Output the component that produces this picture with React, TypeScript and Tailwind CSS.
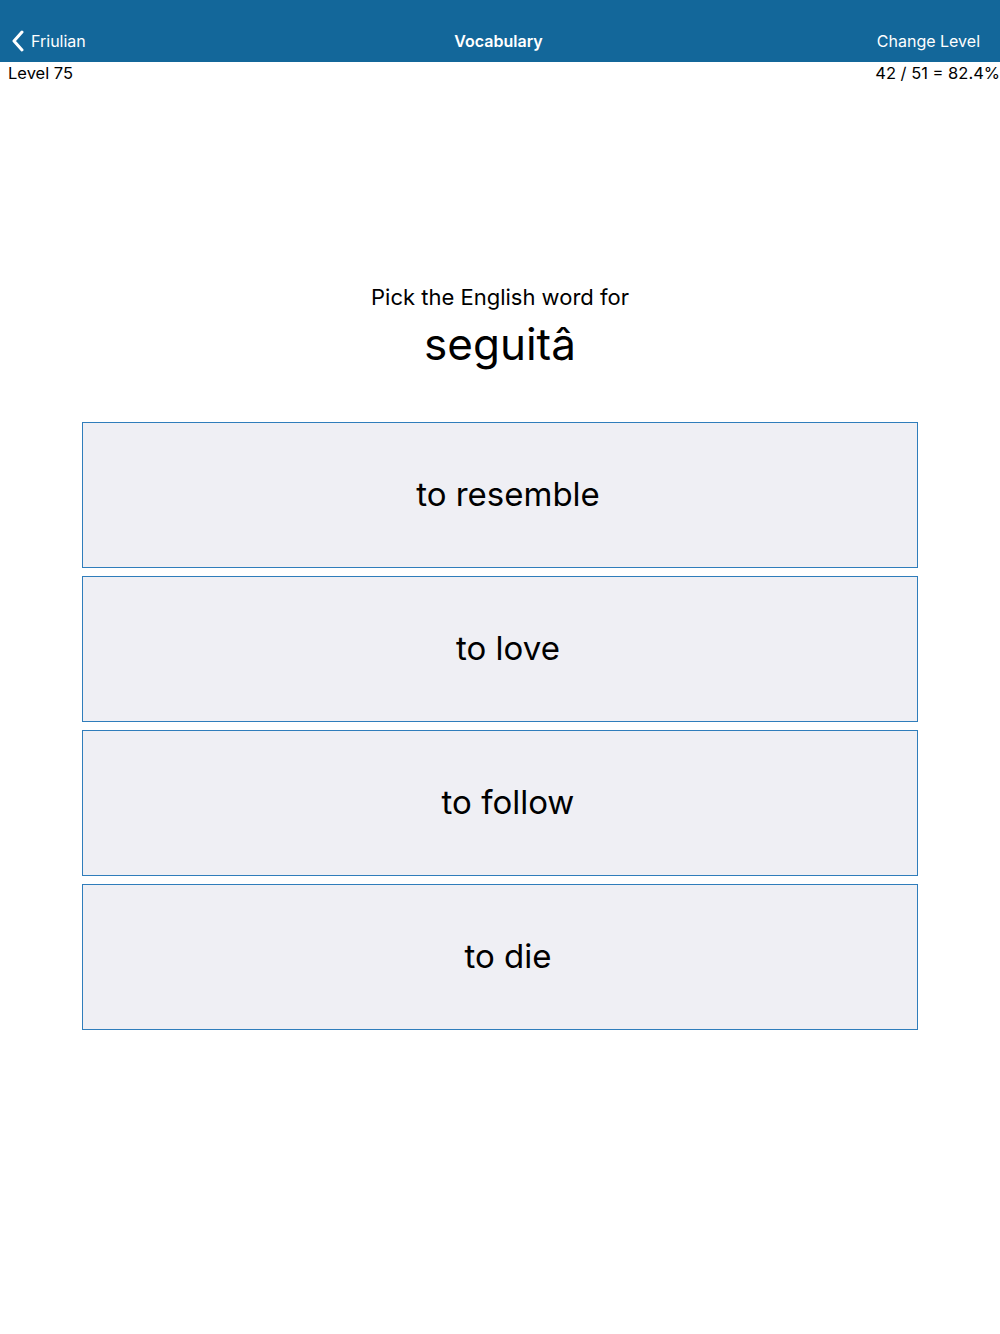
const choices = ["to resemble", "to love", "to follow", "to die"];

export default function App() {
  return (
    <div className="min-h-[1334px] bg-white text-black" style={{ fontFamily: "Inter, 'Noto Sans', sans-serif" }}>
      <header className="flex h-[62px] items-end bg-[#13679a] pb-[9px] text-[16px] text-white">
        <div className="flex flex-1 items-center pl-[11px]">
          <svg width="14" height="22" viewBox="0 0 14 22" className="mr-[6px]">
            <path d="M11 2 L3 11 L11 20" fill="none" stroke="white" strokeWidth="3" strokeLinecap="round" strokeLinejoin="round" />
          </svg>
          <span>Friulian</span>
        </div>
        <div className="flex-1 pl-[6px] text-center font-semibold">Vocabulary</div>
        <div className="flex-1 pr-[20px] text-right">Change Level</div>
      </header>

      <div className="flex justify-between pl-[8px] text-[16.5px] leading-[22px]">
        <span>Level 75</span>
        <span>42 / 51 = 82.4%</span>
      </div>

      <div className="mt-[199px] flex flex-col items-center">
        <p className="text-[22px] leading-[28px]">Pick the English word for</p>
        <p className="mt-[7px] text-[44px] leading-[52px]">seguitâ</p>
      </div>

      <div className="mx-[82px] mt-[52px] flex flex-col gap-[8px]">
        {choices.map((c) => (
          <button
            key={c}
            className="flex h-[146px] items-center justify-center border border-[#2f7dbb] bg-[#efeff4] pl-4 text-[33px]"
          >
            {c}
          </button>
        ))}
      </div>
    </div>
  );
}
